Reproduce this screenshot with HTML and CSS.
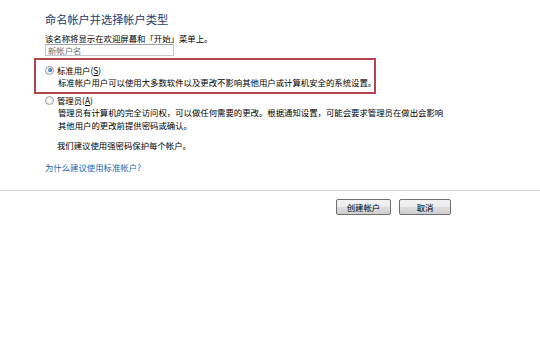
FILE: index.html
```html
<!DOCTYPE html>
<html lang="zh-CN">
<head>
    <meta charset="UTF-8" />
    <title>创建新帐户</title>
    <link rel="stylesheet" href="styles.css">
</head>
<body>
    <div class="page">
        <div class="content">
            <h1 class="title">命名帐户并选择帐户类型</h1>
            <p class="hint">该名称将显示在欢迎屏幕和「开始」菜单上。</p>
            <input class="name-input" placeholder="新帐户名" />

            <label class="option option-selected">
                <span class="option-head"><input type="radio" name="type" class="radio" checked /><span>标准用户(<u>S</u>)</span></span>
                <span class="option-desc">标准帐户用户可以使用大多数软件以及更改不影响其他用户或计算机安全的系统设置。</span>
            </label>

            <label class="option">
                <span class="option-head"><input type="radio" name="type" class="radio" /><span>管理员(<u>A</u>)</span></span>
                <span class="option-desc">管理员有计算机的完全访问权，可以做任何需要的更改。根据通知设置，可能会要求管理员在做出会影响<br>其他用户的更改前提供密码或确认。</span>
            </label>

            <p class="note">我们建议使用强密码保护每个帐户。</p>
            <a class="help-link" href="#">为什么建议使用标准帐户?</a>
        </div>

        <div class="footer">
            <button class="btn">创建帐户</button>
            <button class="btn btn-cancel">取消</button>
        </div>
    </div>
</body>
</html>
```

FILE: styles.css
```css
body {
    margin: 0;
    padding: 0;
    background-color: #fff;
    font-family: "Noto Sans CJK SC", "Liberation Sans", sans-serif;
    font-size: 8.4px;
    color: #000;
}

.page {
    width: 540px;
    height: 353px;
}

.content {
    padding: 11px 0 0 45px;
}

.title {
    margin: 0;
    font-size: 11.2px;
    font-weight: normal;
    line-height: 16px;
    color: #1e3a6e;
}

.hint {
    margin: 5px 0 0;
    line-height: 12px;
}

.name-input {
    display: block;
    box-sizing: border-box;
    width: 129px;
    height: 12px;
    margin: 0;
    padding: 0 2px;
    border: 1px solid #c5c8cf;
    border-top-color: #9ea2aa;
    font-family: inherit;
    font-size: 8.4px;
    line-height: 10px;
    color: #000;
    outline: none;
}

.name-input::placeholder {
    color: #6f6f6f;
}

.option {
    display: block;
    margin-left: -11px;
    padding: 0 0 0 12px;
    width: 326px;
    line-height: 12px;
    border: 2px solid transparent;
}

.option-selected {
    margin-top: 2px;
    padding-top: 4px;
    padding-bottom: 4px;
    border-color: #b8434b;
}

.option + .option {
    border: none;
    padding-left: 14px;
}

.option-head {
    display: flex;
    align-items: center;
    margin-left: -3px;
    gap: 3px;
}

.option-desc {
    display: block;
    padding-left: 10px;
    white-space: nowrap;
}

.option + .option .option-desc {
    line-height: 13px;
}

.radio {
    appearance: none;
    -webkit-appearance: none;
    box-sizing: border-box;
    width: 9px;
    height: 9px;
    margin: 0;
    border: 1px solid #9a9c9e;
    border-radius: 50%;
    background: radial-gradient(circle, #fff 0, #e6e7e8 100%);
    position: relative;
}

.radio:checked::after {
    content: "";
    position: absolute;
    left: 1.5px;
    top: 1.5px;
    width: 4px;
    height: 4px;
    border-radius: 50%;
    background: radial-gradient(circle at 35% 35%, #8fb4e0 0, #1f4f8c 80%);
}

.note {
    margin: 7px 0 0 12px;
    line-height: 12px;
}

.help-link {
    display: block;
    margin-top: 10px;
    line-height: 12px;
    color: #2468ab;
    text-decoration: none;
}

.footer {
    margin-top: 17px;
    border-top: 1px solid #d6d6d6;
    padding: 8px 89px 0 0;
    display: flex;
    justify-content: flex-end;
    gap: 8px;
}

.btn {
    box-sizing: border-box;
    width: 55px;
    height: 16px;
    padding: 0;
    border: 1px solid #707070;
    border-radius: 2px;
    background: linear-gradient(#f2f2f2 0, #ebebeb 50%, #dddddd 51%, #cfcfcf 100%);
    font-family: inherit;
    font-size: 8.4px;
    color: #000;
    line-height: 14px;
}

.btn-cancel {
    width: 52px;
}
```
